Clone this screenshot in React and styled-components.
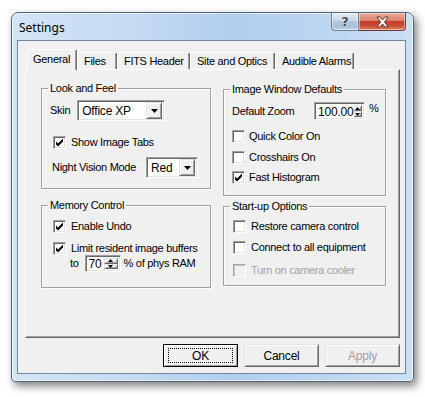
import React from "react";
import styled, { createGlobalStyle } from "styled-components";

const GlobalStyle = createGlobalStyle`
  html, body {
    margin: 0;
    padding: 0;
    background: #ffffff;
  }
  body {
    font-family: "Liberation Sans", Arial, sans-serif;
    font-size: 11px;
    letter-spacing: -0.3px;
    color: #000;
  }
`;

const Page = styled.div`
  width: 425px;
  height: 397px;
  box-sizing: border-box;
  padding: 12px 0 0 11px;
`;

const Window = styled.div`
  width: 403px;
  height: 370px;
  box-sizing: border-box;
  border: 1px solid #55647a;
  border-radius: 7px 7px 4px 4px;
  padding: 0 7px 7px 5px;
  display: flex;
  flex-direction: column;
  background: linear-gradient(
    to right,
    #d3e4f5 0%,
    #c4dbf2 30%,
    #b1cfee 55%,
    #bad5f0 75%,
    #cbdff4 100%
  );
  box-shadow: 3px 4px 9px rgba(0, 0, 0, 0.5), inset 0 0 0 1px rgba(255, 255, 255, 0.6);
`;

const TitleBar = styled.div`
  height: 27px;
  display: flex;
  align-items: flex-start;
  padding-left: 2px;
`;

const Title = styled.div`
  font-family: "Noto Sans", "Open Sans", sans-serif;
  font-size: 12px;
  letter-spacing: 0;
  line-height: 16px;
  margin-top: 7px;
  color: #000;
`;

const CaptionButtons = styled.div`
  margin-left: auto;
  display: flex;
`;

const CaptionButton = styled.div`
  height: 18px;
  width: ${(p) => p.$w}px;
  box-sizing: border-box;
  display: flex;
  align-items: center;
  justify-content: center;
  border: 1px solid ${(p) => (p.$close ? "#6f3b36" : "#6e7f94")};
  border-top: 0;
  border-left: ${(p) => (p.$close ? 0 : "1px solid #6e7f94")};
  border-radius: ${(p) => (p.$close ? "0 0 4px 0" : "0 0 0 4px")};
  background: ${(p) =>
    p.$close
      ? "linear-gradient(#e9a99b 0%, #d9806c 45%, #c2412a 50%, #c84a32 75%, #e3866e 100%)"
      : "linear-gradient(#e4ebf3 0%, #cad8e8 45%, #b3c6dc 50%, #aabfd7 80%, #c3d6ea 100%)"};
  box-shadow: inset 0 0 0 1px rgba(255, 255, 255, 0.45);
`;

const HelpGlyph = styled.span`
  font-family: "DejaVu Sans", sans-serif;
  font-weight: bold;
  font-size: 13px;
  line-height: 13px;
  color: #3d4a5a;
  letter-spacing: 0;
  text-shadow: 0 0 1px #fff, 0 0 1px #fff;
`;

const Client = styled.div`
  flex: 1;
  background: #f0f0f0;
  border: 1px solid #7388a0;
  display: flex;
  flex-direction: column;
  padding: 8px 5px 0 7px;
`;

const TabStrip = styled.div`
  height: 20px;
  display: flex;
  align-items: flex-end;
  padding-left: 2px;
`;

const Tab = styled.div`
  position: relative;
  z-index: ${(p) => (p.$active ? 2 : 1)};
  width: ${(p) => p.$w}px;
  height: ${(p) => (p.$active ? 21 : 17)}px;
  margin-bottom: ${(p) => (p.$active ? -1 : 0)}px;
  box-sizing: border-box;
  background: #f0f0f0;
  border-top: 1px solid #ffffff;
  border-left: 1px solid #ffffff;
  border-right: 1px solid #696969;
  border-radius: 2px 2px 0 0;
  box-shadow: inset -1px 0 0 #a0a0a0;
  padding: ${(p) => (p.$active ? "3px 0 0 5px" : "2px 0 0 6px")};
  line-height: 13px;
  white-space: nowrap;
`;

const Panel = styled.div`
  height: 269px;
  box-sizing: border-box;
  border-top: 1px solid #ffffff;
  border-left: 1px solid #ffffff;
  border-right: 1px solid #696969;
  border-bottom: 1px solid #696969;
  box-shadow: inset -1px -1px 0 #a0a0a0;
  display: flex;
  gap: 12px;
  padding: 12px 13px 0 15px;
`;

const Column = styled.div`
  display: flex;
  flex-direction: column;
  gap: ${(p) => p.$gap}px;
  padding-top: ${(p) => p.$top || 0}px;
  width: ${(p) => p.$w}px;
`;

const Group = styled.fieldset`
  margin: 0;
  padding: 0;
  box-sizing: border-box;
  height: ${(p) => p.$h}px;
  border: 1px solid #a0a0a0;
  box-shadow: 1px 1px 0 #ffffff, inset 1px 1px 0 #ffffff;
  min-width: 0;
`;

const Legend = styled.legend`
  margin-left: 6px;
  padding: 0 2px;
  line-height: 13px;
`;

const Row = styled.div`
  display: flex;
  align-items: center;
  margin-top: ${(p) => p.$mt || 0}px;
  padding-left: ${(p) => p.$pl || 0}px;
  height: ${(p) => p.$h || 13}px;
  white-space: nowrap;
  color: ${(p) => (p.$disabled ? "#a0a0a0" : "#000")};
`;

const Label = styled.span`
  line-height: 13px;
  width: ${(p) => (p.$w ? `${p.$w}px` : "auto")};
  margin-left: ${(p) => p.$ml || 0}px;
`;

const Sunken = styled.div`
  box-sizing: border-box;
  background: #ffffff;
  border-top: 1px solid #a0a0a0;
  border-left: 1px solid #a0a0a0;
  border-right: 1px solid #ffffff;
  border-bottom: 1px solid #ffffff;
  box-shadow: inset 1px 1px 0 #696969, inset -1px -1px 0 #e3e3e3;
`;

const Combo = styled(Sunken)`
  width: ${(p) => p.$w}px;
  height: 21px;
  margin-left: ${(p) => p.$ml || 0}px;
  display: flex;
  align-items: center;
  padding: 2px 2px 2px 4px;
`;

const ComboText = styled.span`
  flex: 1;
  font-size: 12px;
  letter-spacing: -0.2px;
  line-height: 14px;
`;

const Raised = styled.div`
  box-sizing: border-box;
  background: #f0f0f0;
  border-top: 1px solid #e3e3e3;
  border-left: 1px solid #e3e3e3;
  border-right: 1px solid #696969;
  border-bottom: 1px solid #696969;
  box-shadow: inset 1px 1px 0 #ffffff, inset -1px -1px 0 #a0a0a0;
  display: flex;
  align-items: center;
  justify-content: center;
`;

const DropButton = styled(Raised)`
  width: 16px;
  height: 17px;
`;

const Spinner = styled(Sunken)`
  width: ${(p) => p.$w}px;
  height: ${(p) => p.$h}px;
  margin-left: ${(p) => p.$ml || 0}px;
  display: flex;
  padding: 2px;
`;

const SpinText = styled.span`
  flex: 1;
  font-size: ${(p) => p.$fs || 12}px;
  letter-spacing: -0.2px;
  line-height: ${(p) => p.$lh || 13}px;
  padding-left: 1px;
`;

const SpinArrows = styled.div`
  width: 14px;
  display: flex;
  flex-direction: column;
`;

const SpinHalf = styled(Raised)`
  flex: 1;
`;

const Percent = styled.span`
  margin-left: ${(p) => p.$ml || 0}px;
  align-self: ${(p) => (p.$up ? "flex-start" : "center")};
  line-height: 13px;
`;

const Box = styled(Sunken)`
  width: 13px;
  height: 13px;
  flex: none;
  display: flex;
  align-items: center;
  justify-content: center;
  background: ${(p) => (p.$disabled ? "#f0f0f0" : "#ffffff")};
  ${(p) =>
    p.$disabled &&
    `border-color: #a0a0a0 #ffffff #ffffff #a0a0a0; box-shadow: inset 1px 1px 0 #c8c8c8;`}
`;

const ButtonRow = styled.div`
  display: flex;
  justify-content: flex-end;
  gap: 6px;
  margin-top: 6px;
`;

const Button = styled(Raised)`
  width: 75px;
  height: 23px;
  position: relative;
  font-size: 12px;
  letter-spacing: -0.2px;
  color: ${(p) => (p.$disabled ? "#a0a0a0" : "#000")};
  ${(p) =>
    p.$default &&
    `outline: 1px solid #000; outline-offset: -1px; border-color: #ffffff #000 #000 #ffffff;`}
`;

const FocusRing = styled.div`
  position: absolute;
  inset: 3px 4px 3px 4px;
  border: 1px dotted #000;
  pointer-events: none;
`;

const Arrow = ({ up, w = 7, h = 4 }) => (
  <svg width={w} height={h} viewBox={`0 0 ${w} ${h}`}>
    <polygon
      points={up ? `0,${h} ${w},${h} ${w / 2},0` : `0,0 ${w},0 ${w / 2},${h}`}
      fill="#000"
    />
  </svg>
);

const ComboBox = ({ value, w, ml }) => (
  <Combo $w={w} $ml={ml}>
    <ComboText>{value}</ComboText>
    <DropButton>
      <Arrow />
    </DropButton>
  </Combo>
);

const SpinBox = ({ value, w, h, ml, fs, lh }) => (
  <Spinner $w={w} $h={h} $ml={ml}>
    <SpinText $fs={fs} $lh={lh}>{value}</SpinText>
    <SpinArrows>
      <SpinHalf>
        <Arrow up w={5} h={3} />
      </SpinHalf>
      <SpinHalf>
        <Arrow w={5} h={3} />
      </SpinHalf>
    </SpinArrows>
  </Spinner>
);

const CheckBox = ({ checked, disabled, label, mt, pl, gap = 5 }) => (
  <Row $mt={mt} $pl={pl} $disabled={disabled}>
    <Box $disabled={disabled}>
      {checked && (
        <svg width="9" height="9" viewBox="0 0 9 9">
          <path d="M1 3.5 L3 5.5 L8 0.5 L8 3.5 L3 8.5 L1 6.5 Z" fill="#000" />
        </svg>
      )}
    </Box>
    <Label $ml={gap}>{label}</Label>
  </Row>
);

const tabs = [
  { name: "General", w: 50 },
  { name: "Files", w: 40 },
  { name: "FITS Header", w: 73 },
  { name: "Site and Optics", w: 85 },
  { name: "Audible Alarms", w: 79 },
];

export default function App() {
  return (
    <Page>
      <GlobalStyle />
      <Window>
        <TitleBar>
          <Title>Settings</Title>
          <CaptionButtons>
            <CaptionButton $w={28}>
              <HelpGlyph>?</HelpGlyph>
            </CaptionButton>
            <CaptionButton $w={47} $close>
              <svg width="15" height="12" viewBox="0 0 15 12">
                <path
                  d="M2 1 L5 1 L7.5 4 L10 1 L13 1 L9.5 6 L13 11 L10 11 L7.5 8 L5 11 L2 11 L5.5 6 Z"
                  fill="#ffffff"
                  stroke="#5a2a24"
                  strokeWidth="0.9"
                  strokeLinejoin="round"
                />
              </svg>
            </CaptionButton>
          </CaptionButtons>
        </TitleBar>
        <Client>
          <TabStrip>
            {tabs.map((t, i) => (
              <Tab key={t.name} $w={t.w} $active={i === 0}>
                {t.name}
              </Tab>
            ))}
          </TabStrip>
          <Panel>
            <Column $w={170} $gap={10}>
              <Group $h={107}>
                <Legend>Look and Feel</Legend>
                <Row $mt={5} $pl={8} $h={21}>
                  <Label>Skin</Label>
                  <ComboBox value="Office XP" w={88} ml={7} />
                </Row>
                <CheckBox checked label="Show Image Tabs" mt={15} pl={11} />
                <Row $mt={8} $pl={10} $h={21}>
                  <Label $w={94}>Night Vision Mode</Label>
                  <ComboBox value="Red" w={52} />
                </Row>
              </Group>
              <Group $h={89}>
                <Legend>Memory Control</Legend>
                <CheckBox checked label="Enable Undo" mt={8} pl={11} />
                <CheckBox
                  checked
                  label="Limit resident image buffers"
                  mt={9}
                  pl={11}
                />
                <Row $pl={28} $h={17}>
                  <Label>to</Label>
                  <SpinBox value="70" w={36} h={17} ml={6} />
                  <Percent $ml={3}>% of phys RAM</Percent>
                </Row>
              </Group>
            </Column>
            <Column $w={163} $gap={4} $top={1}>
              <Group $h={113}>
                <Legend>Image Window Defaults</Legend>
                <Row $mt={6} $pl={8} $h={18}>
                  <Label $w={82}>Default Zoom</Label>
                  <SpinBox value="100.00" w={51} h={18} fs={12} lh={14} />
                  <Percent $ml={4} $up>
                    %
                  </Percent>
                </Row>
                <CheckBox label="Quick Color On" mt={10} pl={8} gap={4} />
                <CheckBox label="Crosshairs On" mt={8} pl={8} gap={4} />
                <CheckBox checked label="Fast Histogram" mt={7} pl={8} gap={4} />
              </Group>
              <Group $h={86}>
                <Legend>Start-up Options</Legend>
                <CheckBox label="Restore camera control" mt={7} pl={9} />
                <CheckBox label="Connect to all equipment" mt={8} pl={9} />
                <CheckBox
                  disabled
                  label="Turn on camera cooler"
                  mt={10}
                  pl={9}
                />
              </Group>
            </Column>
          </Panel>
          <ButtonRow>
            <Button $default>
              OK
              <FocusRing />
            </Button>
            <Button>Cancel</Button>
            <Button $disabled>Apply</Button>
          </ButtonRow>
        </Client>
      </Window>
    </Page>
  );
}
